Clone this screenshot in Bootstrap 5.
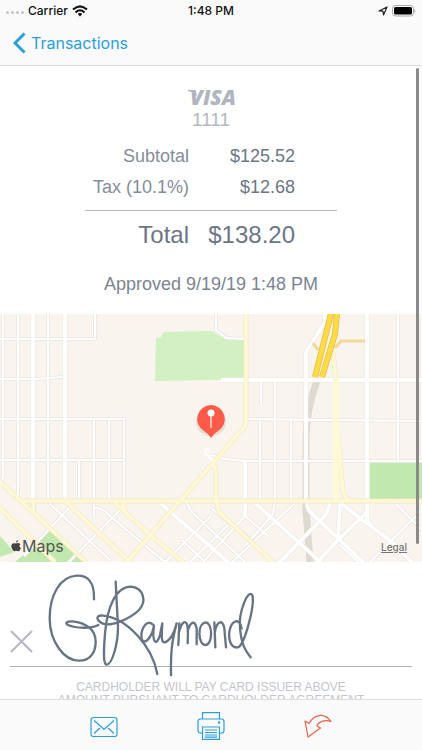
<!DOCTYPE html>
<html lang="en">
<head>
<meta charset="utf-8">
<meta name="viewport" content="width=device-width, initial-scale=1">
<title>Transaction</title>
<link href="https://cdn.jsdelivr.net/npm/bootstrap@5.3.0/dist/css/bootstrap.min.css" rel="stylesheet">
<style>
body{font-family:"Liberation Sans",Arial,sans-serif;color:#6c7686;background:#fff}
.screen{height:100vh;overflow:hidden}
.topbar{font-family:Inter,sans-serif;background:#fafafa;border-bottom:1px solid #dcdcdc;flex:none}
.status{height:21px;font-size:12px;font-weight:500;color:#111;padding:0 6px}
.status>div{flex:1 1 0}
.dots{gap:2px}
.dots i{width:3px;height:3px;border-radius:50%;background:#c4c4c4}
.back{height:44px;font-size:16px;color:#2a9fdc;padding-left:13px;gap:5px}
.content{min-height:0}
.receipt{padding-top:20px}
.brand{font:italic 800 21px/22px "Open Sans",sans-serif;color:#b0b5c0;padding-left:4px}
.brand svg{left:2px;top:4px}
.last4{font-size:19px;line-height:24px;color:#b4b8c2}
.sums{width:252px;border-collapse:collapse;margin-top:9px}
.sums th{font-weight:400;color:#858d9b;text-align:right;width:104px;padding:0}
.sums td{text-align:right;padding:0 42px 0 0}
.sums tbody tr{font-size:18px;line-height:30px;height:31px;vertical-align:top}
.sums tbody tr:last-child{height:38px}
.sums tfoot tr{font-size:24px;height:50px}
.sums tfoot{border-top:1px solid #b4b8c0}
.sums tfoot th{color:#6c7686}
.approved{font-size:18px;line-height:24px;color:#7b8492;margin:12px 0 18px}
.map{height:248px;background:#f9f4ed;overflow:hidden;flex:none}
.map>svg{width:100%;height:248px}
.maplogo{left:10px;bottom:6px;font:400 16px/20px Inter,sans-serif;color:#555}
.legal{right:15px;bottom:9px;font:500 10px/12px Inter,sans-serif;color:#777}
.sign{height:105px;margin:0 10px;border-bottom:1px solid #b0b4ba;flex:none}
.sign svg{left:-10px;top:0;overflow:visible}
.terms{font-size:12px;line-height:13px;color:#c3c6cc;padding-top:14px}
.thumb{right:3px;top:68px;width:3px;height:476px;border-radius:2px;background:#8c8a88}
.tools{height:51px;background:#fafafa;border-top:1px solid #dedede;flex:none;padding:2px 50px 0}
.tools button{flex:1 1 0;color:#2a9fdc;border:0;background:none;padding:0}
.tools .undo{color:#e8604a}
</style>
<script src="https://cdn.jsdelivr.net/npm/bootstrap@5.3.0/dist/js/bootstrap.bundle.min.js"></script>
</head>
<body>
<div class="screen d-flex flex-column position-relative">
<header class="topbar">
  <div class="status d-flex align-items-center">
    <div class="d-flex align-items-center gap-1"><span class="dots d-flex pt-1"><i></i><i></i><i></i><i></i></span>Carrier
      <svg width="16" height="12" viewBox="0 0 16 12" fill="none" stroke="#111" stroke-width="2"><path d="M1 4.600Q8-1.800 15 4.600M3.500 7.400Q8 3.200 12.500 7.400"/><path d="M5.700 9Q8 7.200 10.300 9L8 11.500Z" fill="#111" stroke="none"/></svg></div>
    <span>1:48 PM</span>
    <div class="d-flex align-items-center justify-content-end gap-1">
      <svg width="10" height="10" viewBox="0 0 10 10" fill="none" stroke="#222" stroke-width="1.200" stroke-linejoin="round"><path d="M1 5L9 1 5.500 9 5 5.200Z"/></svg>
      <svg width="24" height="12" viewBox="0 0 24 12"><rect x=".5" y=".5" width="21" height="10.500" rx="3" fill="none" stroke="#aaa"/><rect x="2" y="2" width="18" height="7.500" rx="1.500"/><path d="M22.500 4v4q2-2 0-4" fill="#999"/></svg></div>
  </div>
  <nav><a href="#" class="back d-flex align-items-center text-decoration-none"><svg width="13" height="22" viewBox="0 0 13 22" fill="none" stroke="currentColor" stroke-width="3"><path d="M11.500 1.500L2 11l9.500 9.500"/></svg><span>Transactions</span></a></nav>
</header>
<main class="content flex-fill overflow-hidden d-flex flex-column">
  <section class="receipt d-flex flex-column align-items-center flex-shrink-0">
    <div class="brand position-relative"><svg class="position-absolute" width="9" height="7" viewBox="0 0 9 7" fill="currentColor"><path d="M0 0h6q2 0 2 2l1 5Q6 2 0 1Z"/></svg>VISA</div>
    <div class="last4">1111</div>
    <table class="sums"><tbody><tr><th scope="row">Subtotal</th><td>$125.52</td></tr><tr><th scope="row">Tax (10.1%)</th><td>$12.68</td></tr></tbody><tfoot><tr><th scope="row">Total</th><td>$138.20</td></tr></tfoot></table>
    <p class="approved">Approved 9/19/19 1:48 PM</p>
  </section>
  <section class="map position-relative">
    <svg viewBox="0 314 422 248" preserveAspectRatio="xMidYMid slice" fill="none" aria-label="Map">
      <defs>
        <path id="thin" d="M3 314V475Q4 479 0 482M18 314V499M48 314V502L110 560M95 314V339M94 419V517M109 419V498M124 419V501M79 460V500M0 339H95M0 379H35L62 377M0 419H124M0 460H124M216 314V330L226 338L245 339M247 419L422 421M211 455L224 459L245 461H422M261 380V405M275 380V500L273 514L246 545M260 420V500M291 420V500M398 314V461M72 505L24 556M94 508Q102 507 110 516L165 562M121 509L65 566M187 503Q190 511 197 517L245 562M211 516L165 562M228 525L190 562M245 516L205 560M245 516L268 536M293 505L228 566M395 503L422 530M422 510L370 562M211 508L245 535L272 562M182 540L205 562M340 545L358 562"/>
        <path id="wide" d="M33 314V512M65 314V499M221 380H422M306 500V420V352L325 322V314M367 314V521L376 531M245 461V516M160 503L228 562M255 503L325 566M307 503Q307 509 312 514L365 564M330 503Q328 514 320 521L276 566M340 503L338 540L314 566M340 503L393 543L412 562M367 512L338 540"/>
        <path id="pale" d="M246 314V425L213 463L125 564M213 463L216 472V500L219 512L275 564M333 352L336 380V500M338 435L343 492L348 501M0 482L22 502L88 564M20 501H422M0 508L55 562M33 501V512M66 502L132 564M115 503L150 535L185 564M122 503L128 517"/>
      </defs>
      <path fill="#d2f0c2" d="M161 337L164 332L211 331L225 339L245 340V380H205L155 381L156 338L161 337Z"/>
      <path fill="#c1e8ae" d="M370 463H422V499H370ZM50 530L87 562H15L28 551ZM0 536L14 552L0 557Z"/>
      <path stroke="#dedad2" stroke-width="7" d="M317 381Q306 410 306 440V510L310 562"/>
      <use href="#thin" stroke="#e8e5e1" stroke-width="3.600"/><use href="#wide" stroke="#e8e5e1" stroke-width="4.800"/>
      <use href="#thin" stroke="#fff" stroke-width="2.200"/><use href="#wide" stroke="#fff" stroke-width="3.800"/>
      <use href="#pale" stroke="#f1e8c8" stroke-width="4.800"/><use href="#pale" stroke="#fff8d4" stroke-width="3.600"/>
      <path stroke="#fff8d4" stroke-width="6" d="M336 380V500"/>
      <path stroke="#f5d79b" stroke-width="3" d="M365 341H341L335 348M313 343L318 350"/>
      <path stroke="#e8b93c" stroke-width="6" d="M331 314L315 377M337 314L335 334L322 377"/><path stroke="#ffdc45" stroke-width="4.600" d="M331 314L315 377M337 314L335 334L322 377"/>
      <path stroke="#fff" stroke-width="2.500" d="M213 460L206 454Q203 450 207 449L210 451"/>
      <ellipse cx="211" cy="422" rx="15" ry="14" fill="#d8cfc5" opacity=".6"/>
      <path fill="#fb5b48" d="M211 405a14 14 0 0 1 7 26q-5 3-7 7-2-4-7-7a14 14 0 0 1 7-26"/>
      <path stroke="#ffd9d0" stroke-width="1.500" d="M211 413V428"/><circle cx="211" cy="413" r="3.500" fill="#fff"/>
    </svg>
    <div class="maplogo position-absolute d-flex align-items-center"><svg width="12" height="12" viewBox="0 0 12 14" fill="#444"><path d="M8.600 0Q8.700 2.700 6 3.200 5.800 1 8.600 0M6 4.200Q9 2.700 11.200 5 8.500 7 11.700 9.500 10.500 13 8.500 13 7.500 12.500 6 12.500 5 13.200 3.700 13 1 11.500.5 7.500.7 3.500 4 3.700Z"/></svg><span>Maps</span></div>
    <a href="#" class="legal position-absolute">Legal</a>
  </section>
  <section class="sign position-relative">
    <svg class="position-absolute" width="270" height="120" viewBox="0 562 270 120" fill="none" aria-label="Signature">
      <path stroke="#b5b8c3" stroke-width="2" d="M11 631L32 652M32 631L11 652"/>
      <g stroke="#687484" stroke-width="7" stroke-linecap="round" stroke-linejoin="round">
        <path transform="translate(44 570) scale(.33333)" d="M150 88C152 35 130 15 98 17C45 20 17 80 17 145C17 215 60 272 105 272C140 272 155 245 155 215C155 178 125 158 85 154C68 153 62 160 72 165C95 175 140 177 163 165M215 35L222 170C222 220 205 285 187 284C176 280 180 230 183 190C190 110 215 50 262 50C300 55 308 95 285 120C260 145 200 172 175 160C155 150 155 133 178 137C250 145 325 230 340 312"/>
        <path transform="translate(130 585) scale(.33333)" d="M70 120C50 98 30 135 35 162C42 182 65 160 72 122C65 175 80 185 90 150L97 115C95 150 92 174 105 172C125 165 135 135 140 115C125 170 122 200 123 271M148 115L145 180M146 145C155 110 165 105 171 118C176 135 173 150 173 175M173 140C180 110 195 103 200 130L200 178M226 112C200 118 205 180 226 180C249 180 249 112 226 112M253 112L256 187M255 140C260 110 278 100 283 130L288 187M335 130C330 98 305 103 298 140C295 170 305 190 325 187C345 175 375 60 367 30C355 10 325 80 330 130C335 180 345 195 362 217"/>
      </g>
    </svg>
  </section>
  <p class="terms text-center text-nowrap mb-0">CARDHOLDER WILL PAY CARD ISSUER ABOVE<br>AMOUNT PURSUANT TO CARDHOLDER AGREEMENT</p>
</main>
<div class="thumb position-absolute"></div>
<footer class="tools d-flex align-items-stretch">
  <button type="button" aria-label="Email receipt"><svg width="28" height="22" viewBox="0 0 28 22" fill="none" stroke="currentColor" stroke-width="1.200"><rect x="1" y="1.500" width="26" height="19" rx="2.500"/><path d="M4 4.500L11.500 11M24 4.500L14 13.500 11.500 11M4 17.500L10 12M24 17.500L18 12"/></svg></button>
  <button type="button" aria-label="Print receipt"><svg width="28" height="28" viewBox="0 0 28 28" fill="none" stroke="currentColor" stroke-width="1.200"><path d="M5.500 7V.700H22.500V7M5.500 21H3.500Q1 21 1 18.500V9.500Q1 7 3.500 7H24.500Q27 7 27 9.500V18.500Q27 21 24.500 21H22.500"/><path d="M5.500 15H22.500V27.300H5.500ZM8 18H20M8 20.500H20M8 23H20M8 25.200H20"/><circle cx="22" cy="10.500" r=".6"/></svg></button>
  <button type="button" class="undo" aria-label="Refund"><svg width="28" height="24" viewBox="0 0 28 24" fill="none" stroke="currentColor" stroke-width="1.200" stroke-linejoin="round"><path d="M1 7L5 9.500C10 .5 20-2 27 7.500 21 5 14 8 13 12L16.500 14 4 23Z"/></svg></button>
</footer>
</div>
</body>
</html>
